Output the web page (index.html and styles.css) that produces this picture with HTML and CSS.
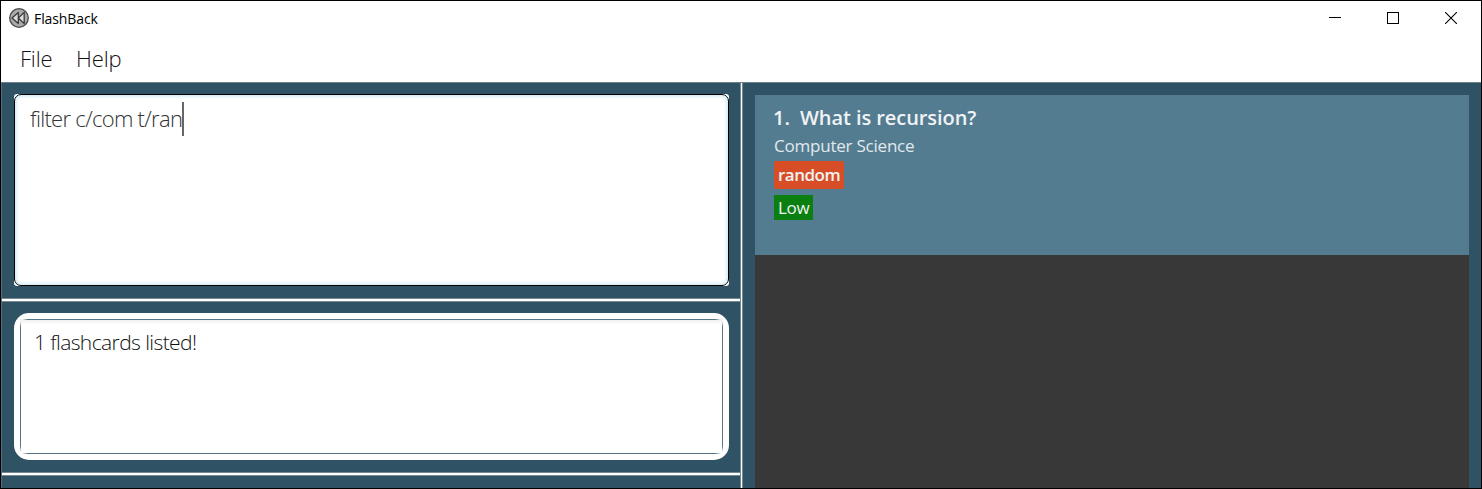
FILE: index.html
```html
<!DOCTYPE html>
<html lang="en">
<head>
<meta charset="utf-8">
<title>FlashBack</title>
<link rel="stylesheet" href="styles.css">
</head>
<body>
<div class="window">
  <header class="titlebar">
    <svg class="logo" width="20" height="20" viewBox="0 0 20 20">
      <circle cx="10" cy="10" r="9.3" fill="#aaa" stroke="#4a4a4a" stroke-width="1.3"/>
      <path d="M9.3 4.4V15.6L3 10ZM15.2 4.4V15.6L9.3 10Z" fill="#ddd" stroke="#3a3a3a" stroke-width="1.3" stroke-linejoin="round"/>
    </svg>
    <span class="app-name">FlashBack</span>
    <div class="controls">
      <svg width="12" height="12" viewBox="0 0 12 12" shape-rendering="crispEdges"><path d="M0 5.5H12" stroke="#000"/></svg>
      <svg width="12" height="12" viewBox="0 0 12 12" shape-rendering="crispEdges"><rect x=".5" y=".5" width="11" height="11" fill="none" stroke="#000"/></svg>
      <svg width="12" height="12" viewBox="0 0 12 12"><path d="M0 0L12 12M12 0L0 12" stroke="#000" stroke-width="1.1"/></svg>
    </div>
  </header>
  <nav class="menubar"><span class="menu-file">File</span><span class="menu-help">Help</span></nav>
  <main class="content">
    <section class="left">
      <div class="pane command"><div class="command-frame"><div class="command-box"><span class="command-text">filter c/com t/ran</span><i class="caret"></i></div></div></div>
      <div class="divider"></div>
      <div class="pane result"><div class="result-box"><div class="result-inner"><span class="result-text">1 flashcards listed!</span></div></div></div>
      <div class="divider"></div>
    </section>
    <div class="split"></div>
    <section class="right">
      <div class="list">
        <article class="card">
          <h1 class="question"><span class="number">1.</span><span class="question-text">What is recursion?</span></h1>
          <p class="category">Computer Science</p>
          <span class="tag">random</span>
          <span class="priority">Low</span>
        </article>
      </div>
    </section>
  </main>
</div>
</body>
</html>
```
FILE: styles.css
```css
* { box-sizing: border-box; }
body { margin: 0; font-family: "Open Sans", "Noto Sans", sans-serif; overflow: hidden; }
.window { width: 1482px; height: 489px; border: 1px solid #000; background: #fff; display: flex; flex-direction: column; }
.titlebar { height: 35px; flex: none; display: flex; align-items: center; padding-left: 8px; }
.logo { flex: none; margin-top: -1px; }
.app-name { margin-left: 5px; font-size: 14px; letter-spacing: -0.1px; color: #000; }
.controls { margin-left: auto; display: flex; gap: 46px; padding-right: 24px; margin-top: -1px; }
.menubar { height: 46px; flex: none; display: flex; gap: 24px; padding-left: 19px; font-size: 22px; font-weight: 300; line-height: 44px; color: #111; }
.menu-file { width: 32px; letter-spacing: -0.2px; }
.menu-help { letter-spacing: -0.1px; }
.content { flex: 1; min-height: 0; display: flex; background: #2f5264; border-top: 1px solid #6c818c; }
.left { width: 739px; flex: none; display: flex; flex-direction: column; border-left: 1px solid #526f7e; }
.pane { flex: none; padding: 11px 11px 0 12px; }
.command { height: 215px; }
.command-frame { height: 192px; background: #fff; border-radius: 3px; }
.command-box { height: 192px; display: flex; background: #fff; border: 1px solid #000; border-radius: 7px; box-shadow: inset 0 0 3px 2px #d8edf5; padding: 7px 0 0 15px; }
.command-text { font-size: 22px; font-weight: 300; line-height: 32px; letter-spacing: -0.7px; white-space: pre; color: #333; }
.caret { width: 2px; height: 34px; background: #666; }
.divider { height: 4px; flex: none; background: #fff; border: solid #758993; border-width: 1px 0; }
.result { height: 170px; }
.result-box { height: 147px; background: #fff; border-radius: 15px; padding: 6px; }
.result-inner {
  height: 135px; padding: 7px 0 0 14px;
  background:
    linear-gradient(90deg, #fff, #567484 6px, #567484 calc(100% - 6px), #fff) top / calc(100% - 4px) 1px no-repeat,
    linear-gradient(90deg, #fff, #567484 6px, #567484 calc(100% - 6px), #fff) bottom / calc(100% - 4px) 1px no-repeat,
    linear-gradient(#fff, #567484 6px, #567484 calc(100% - 6px), #fff) left / 1px calc(100% - 4px) no-repeat,
    linear-gradient(#fff, #567484 6px, #567484 calc(100% - 6px), #fff) right / 1px calc(100% - 4px) no-repeat,
    linear-gradient(#eee, #fff 6px);
}
.result-text { display: block; font-size: 21px; font-weight: 300; line-height: 32px; letter-spacing: -0.59px; white-space: pre; color: #111; }
.split { width: 3px; flex: none; background: #fff; border: solid #758993; border-width: 0 1px; }
.right { flex: 1; padding: 12px 12px 0 12px; }
.list { height: 100%; background: #383838; }
.card { height: 160px; background: #547c90; padding: 9px 19px; display: flex; flex-direction: column; align-items: flex-start; color: #f0f3f5; }
.question { display: flex; margin: 0; font-size: 20px; font-weight: 600; line-height: 28px; white-space: pre; }
.number { width: 26px; margin-left: -1px; margin-right: 1px; }
.question-text { letter-spacing: -0.07px; }
.category { margin: 0; font-size: 17px; line-height: 28px; letter-spacing: -0.22px; color: #e2e9ed; }
.tag { width: 70px; height: 28px; margin-top: 1px; padding: 0 4px; background: #d74e26; border-radius: 2px; font-size: 17px; font-weight: 600; line-height: 27px; letter-spacing: -0.5px; }
.priority { width: 39px; height: 25px; margin-top: 6px; padding: 0 4px; background: #0b8010; font-size: 17px; line-height: 25px; letter-spacing: -0.3px; }
```
